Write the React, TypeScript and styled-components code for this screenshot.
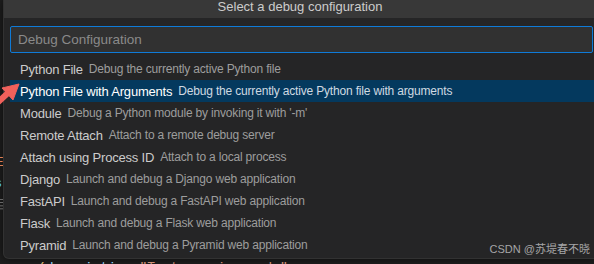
import React from 'react';
import styled, { createGlobalStyle } from 'styled-components';

const GlobalStyle = createGlobalStyle`
  html, body { margin: 0; padding: 0; background: #1e1e1e; }
  body { font-family: "Liberation Sans", Arial, sans-serif; }
`;

type Item = { label: string; desc: string };

const items: Item[] = [
    { label: 'Python File', desc: 'Debug the currently active Python file' },
    { label: 'Python File with Arguments', desc: 'Debug the currently active Python file with arguments' },
    { label: 'Module', desc: "Debug a Python module by invoking it with '-m'" },
    { label: 'Remote Attach', desc: 'Attach to a remote debug server' },
    { label: 'Attach using Process ID', desc: 'Attach to a local process' },
    { label: 'Django', desc: 'Launch and debug a Django web application' },
    { label: 'FastAPI', desc: 'Launch and debug a FastAPI web application' },
    { label: 'Flask', desc: 'Launch and debug a Flask web application' },
    { label: 'Pyramid', desc: 'Launch and debug a Pyramid web application' },
];

// bits of editor text peeking out left of the widget
const gutter = [
    { top: 113, ch: ')', color: '#e5c07b' },
    { top: 127, ch: ')', color: '#e5c07b' },
    { top: 155, ch: 'E', color: '#d7805a' },
    { top: 176, ch: 's', color: '#4fc1ff' },
    { top: 198, ch: '目', color: '#7a7a7a' },
];

export default function App() {
    return (
        <>
            <GlobalStyle />
            <Page>
                <Top>
                    <Gutter>
                        {gutter.map((g, i) => (
                            <GutterChar key={i} style={{ top: g.top, color: g.color }}>{g.ch}</GutterChar>
                        ))}
                    </Gutter>
                    <Widget>
                        <Title>Select a debug configuration</Title>
                        <InputWrap>
                            <Input placeholder="Debug Configuration" readOnly />
                        </InputWrap>
                        <List>
                            {items.map((it, i) => (
                                <Row key={it.label} selected={i === 1}>
                                    <Label>{it.label}</Label>
                                    <Desc selected={i === 1}>{it.desc}</Desc>
                                </Row>
                            ))}
                        </List>
                    </Widget>
                </Top>
                <EditorLine>
                    <span style={{ color: '#e5c07b' }}>(</span>
                    <span style={{ color: '#9cdcfe' }}>description</span>
                    <span style={{ color: '#d4d4d4' }}>=</span>
                    <span style={{ color: '#ce9178' }}>"Test running mode"</span>
                </EditorLine>
                <Watermark>CSDN @苏堤春不晓</Watermark>
                <Arrow width="30" height="40" viewBox="0 0 30 40">
                    <path d="M-4 33 L9 21" stroke="#f0615b" strokeWidth="6" strokeLinecap="round" />
                    <path d="M19 13 L2 17 L13 29 Z" fill="#f0615b" strokeLinejoin="round" stroke="#f0615b" strokeWidth="1" />
                </Arrow>
            </Page>
        </>
    );
}

const Page = styled.div`
    position: relative;
    width: 594px;
    height: 264px;
    overflow: hidden;
    background: #1e1e1e;
`;

const Top = styled.div`
    display: flex;
    height: 259px;
`;

const Gutter = styled.div`
    position: relative;
    width: 3px;
    flex: none;
    overflow: hidden;
`;

const GutterChar = styled.span`
    position: absolute;
    left: -5px;
    font-size: 13px;
    line-height: 14px;
`;

const Widget = styled.div`
    flex: none;
    width: 597px;
    height: 259px;
    background: #252526;
    border: 1px solid #323232;
    border-top: none;
    border-radius: 0 0 6px 6px;
    box-sizing: border-box;
    box-shadow: 0 0 8px rgba(0, 0, 0, 0.6);
    display: flex;
    flex-direction: column;
    overflow: hidden;
`;

const Title = styled.div`
    height: 18px;
    background: #383838;
    color: #cccccc;
    font-size: 13px;
    line-height: 14px;
    text-align: center;
    margin-left: -3px;
`;

const InputWrap = styled.div`
    padding: 8px 6px 0 6px;
`;

const Input = styled.input`
    display: block;
    width: 100%;
    height: 27px;
    box-sizing: border-box;
    background: #313131;
    border: 1px solid #0f7bd8;
    border-radius: 2px;
    color: #cccccc;
    font-family: "Liberation Sans", Arial, sans-serif;
    font-size: 13.5px;
    padding: 0 7px;
    outline: none;
    &::placeholder { color: #8a8a8a; }
`;

const List = styled.div`
    margin-top: 5px;
    padding-left: 6px;
`;

const Row = styled.div<{ selected?: boolean }>`
    display: flex;
    align-items: center;
    gap: 6px;
    height: 22px;
    padding-left: 10px;
    white-space: nowrap;
    background: ${p => (p.selected ? '#04395e' : 'transparent')};
    color: ${p => (p.selected ? '#ffffff' : '#cccccc')};
`;

const Label = styled.span`
    font-size: 13px;
    letter-spacing: -0.2px;
`;

const Desc = styled.span<{ selected?: boolean }>`
    font-size: 12px;
    letter-spacing: -0.18px;
    color: ${p => (p.selected ? '#cfd9e2' : '#9d9d9d')};
`;

const EditorLine = styled.div`
    height: 5px;
    padding-left: 38px;
    font-size: 13px;
    line-height: 17px;
    font-family: "Liberation Mono", monospace;
    white-space: nowrap;
    overflow: hidden;
`;

const Watermark = styled.div`
    position: absolute;
    right: 4px;
    top: 240px;
    font-size: 11px;
    color: #a6a6a6;
    font-family: "Liberation Sans", "Noto Sans CJK SC", sans-serif;
`;

const Arrow = styled.svg`
    position: absolute;
    left: 0;
    top: 71px;
`;
